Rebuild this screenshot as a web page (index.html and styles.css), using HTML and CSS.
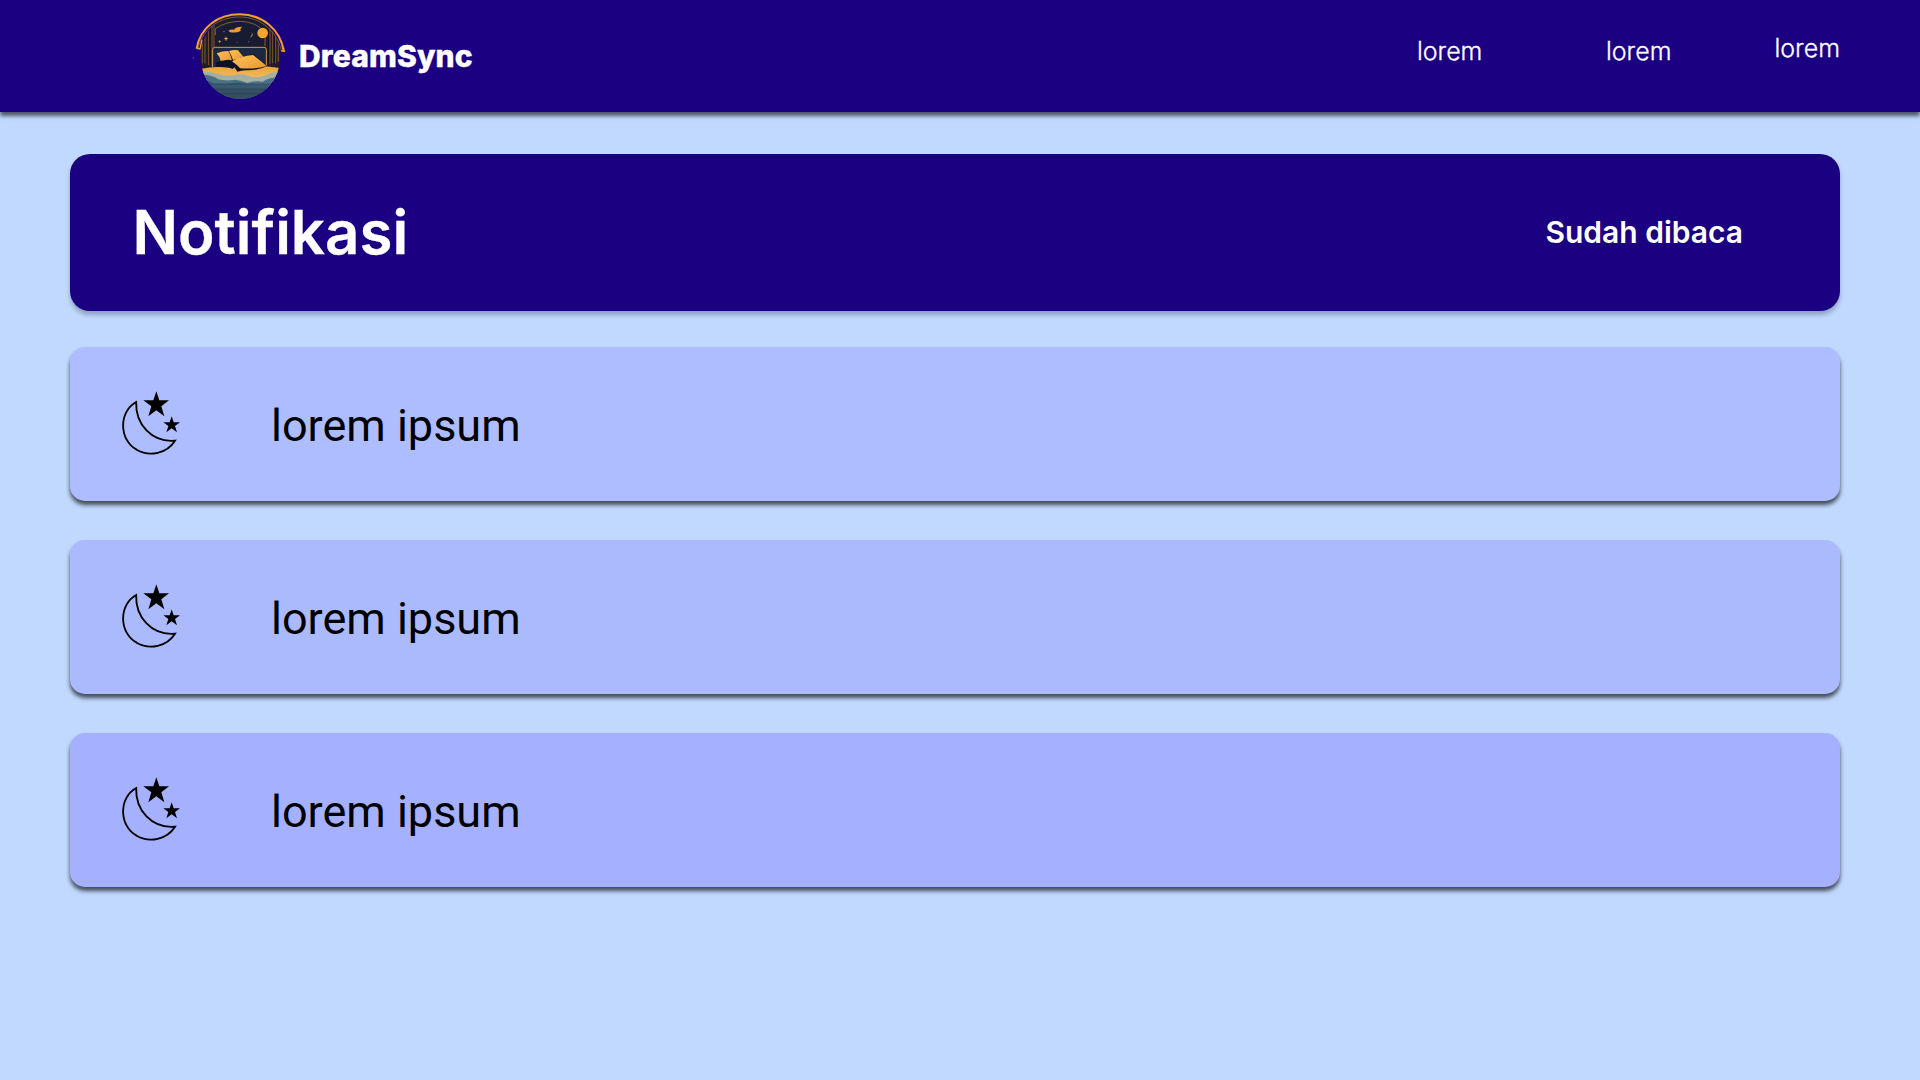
FILE: index.html
```html
<!DOCTYPE html>
<html lang="id">
<head>
<meta charset="utf-8">
<title>DreamSync</title>
<link rel="stylesheet" href="styles.css">
</head>
<body>
<svg class="defs" width="0" height="0" aria-hidden="true">
  <symbol id="night" viewBox="0 0 240 240">
    <path d="M78.500 66C26 95 26 179 80 209C119 232 171 220 195 182C125 188 76 133 78.500 66Z" fill="none" stroke="#000" stroke-width="5.500"/>
    <path d="M139 34L148 61L177 61L154 79L163 109L139 91L115 109L124 79L100 61L130 61Z"/>
    <path d="M185 109L191 127L210 127L195 138L201 157L185 145L169 157L175 138L160 127L179 127Z"/>
  </symbol>
</svg>
<header class="topbar">
  <div class="brand">
    <svg class="logo" viewBox="36 30 288 276">
      <defs>
        <clipPath id="disc"><ellipse cx="181" cy="169" rx="120" ry="128"/></clipPath>
        <linearGradient id="gold" x1="0" y1="0" x2="1" y2="1"><stop offset="0" stop-color="#ffc35a"/><stop offset="1" stop-color="#e8962f"/></linearGradient>
        <linearGradient id="quilt" x1="0" y1="0" x2="0" y2="1"><stop offset="0" stop-color="#eaa43c"/><stop offset="1" stop-color="#f5bd62"/></linearGradient>
      </defs>
      <g clip-path="url(#disc)">
        <rect x="50" y="30" width="260" height="275" fill="#171c32"/>
        <path d="M60 95H104V200H60ZM256 95H310V200H256Z" fill="#241d27"/>
        <path d="M67 100V190M75 90V190M86 80V195M96 74V198M102 76V200M270 82V192M278 88V190M287 98V190M295 108V185" stroke="#8a6332" stroke-width="2.5" fill="none"/>
        <path d="M90 76V190M265 78V190M283 92V190" stroke="#0d1226" stroke-width="3"/>
        <path d="M106 105V86Q138 64 181 64Q228 65 255 97V138" fill="none" stroke="#9b6b35" stroke-width="2.5"/>
        <path d="M98 202V148Q98 142 104 142H252Q259 142 259 148V205" fill="#1b2840" stroke="#d39c50" stroke-width="3"/>
        <path d="M65 206Q98 198 151 203L250 198L300 204V242H62Z" fill="url(#quilt)"/>
        <path d="M60 215Q85 212 106 220Q137 231 166 225Q187 220 202 227Q232 238 261 224Q286 212 305 217V270H60Z" fill="#a1afa5"/>
        <path d="M60 225Q90 221 115 238Q137 244 166 239Q182 240 202 249Q226 241 248 245Q274 229 305 234V310H60Z" fill="#4b7184"/>
        <path d="M60 238Q83 239 102 251H141L174 247L202 253H305V310H60Z" fill="#385a70"/>
        <path d="M60 267H305V310H60Z" fill="#344f61"/>
        <path d="M74 252H290M77 267H287M103 281H264" stroke="#20394e" stroke-width="1.5"/>
      </g>
      <path d="M54 147C66 91 112 51 180 51C243 51 292 96 304 152L315 155L310 137" fill="none" stroke="#8e5727" stroke-width="3"/>
      <path d="M50 145C61 85 110 43 180 43C246 43 301 88 311 153" fill="none" stroke="#f2a030" stroke-width="6"/>
      <path d="M49 145L60 147L66 119M303 152L315 155" stroke="#f2a030" stroke-width="4" fill="none"/>
      <path d="M107 188L126 180L162 176L188 170L158 207L145 202L109 200Z" fill="#0b1126"/>
      <path d="M110 160Q127 153 145 153L150 163L156 181L143 179L122 183Q120 170 110 160Z" fill="url(#gold)"/>
      <path d="M147 153Q162 149 174 151L190 170Q178 177 159 180Q154 164 147 153Z" fill="url(#gold)"/>
      <path d="M154 186L184 172L221 162L262 198Q238 210 206 211Q188 209 172 215Z" fill="#101328"/>
      <path d="M156 184Q184 167 219 165Q238 179 260 198Q229 208 180 205Q173 196 156 184Z" fill="url(#gold)"/>
      <path d="M145 92Q153 87 162 89Q166 80 187 80Q179 85 182 93Q170 99 151 97Z" fill="#f09a32"/>
      <circle cx="248" cy="99" r="16" fill="#f7a52d"/>
      <path d="M214 95Q224 108 209 113Q219 104 214 95Z" fill="#c69255"/>
      <path d="M138 109L140 114L145 116L140 118L138 124L136 118L131 116L136 114Z" fill="#f6ad42"/>
      <path d="M119 120L121 123L124 124L121 126L119 129L117 126L114 124L117 123Z" fill="#d18b3b"/>
      <circle cx="132" cy="95" r="2" fill="#c1803a"/><circle cx="171" cy="126" r="1.5" fill="#66718a"/><circle cx="206" cy="125" r="1.5" fill="#9a754b"/>
      <circle cx="40" cy="174" r="2" fill="#66509b"/>
    </svg>
    <span class="brand-name">DreamSync</span>
  </div>
  <nav class="nav">
    <a class="nav-link">lorem</a>
    <a class="nav-link">lorem</a>
    <a class="nav-link nav-link-last">lorem</a>
  </nav>
</header>
<main class="page">
  <section class="heading">
    <h1 class="title">Notifikasi</h1>
    <span class="read">Sudah dibaca</span>
  </section>
  <section class="list">
    <article class="item"><svg class="icon"><use href="#night"/></svg><p class="text">lorem ipsum</p></article>
    <article class="item item-second"><svg class="icon"><use href="#night"/></svg><p class="text">lorem ipsum</p></article>
    <article class="item item-third"><svg class="icon"><use href="#night"/></svg><p class="text">lorem ipsum</p></article>
  </section>
</main>
</body>
</html>
```
FILE: styles.css
```css
* { box-sizing: border-box; }
body {
  margin: 0;
  height: 1080px;
  overflow: hidden;
  background: #c1d9ff;
  font-family: Inter, sans-serif;
}
.defs { display: block; }
.topbar {
  display: flex;
  justify-content: space-between;
  height: 111.5px;
  padding: 10px 80px 0 192px;
  background: #1b0082;
  color: #fff;
  box-shadow: 0 4px 4px rgba(0, 0, 0, .6);
}
.brand { display: flex; align-items: flex-start; gap: 11px; }
.logo { width: 96px; height: 92px; }
.brand-name {
  margin-top: 28px;
  font-size: 30px;
  line-height: 36px;
  font-weight: 800;
  letter-spacing: .15px;
  -webkit-text-stroke: .4px #fff;
}
.nav { display: flex; align-items: flex-start; padding-top: 26px; }
.nav-link {
  margin-right: 123.5px;
  font-size: 25px;
  line-height: 30px;
  font-weight: 300;
  -webkit-text-stroke: .3px #fff;
}
.nav-link:nth-child(2) { margin-right: 103px; }
.nav-link-last { margin: -3px 0 0; }
.page { padding: 42px 80px 0 70px; }
.heading {
  display: flex;
  align-items: center;
  justify-content: space-between;
  height: 157.5px;
  padding: 0 97px 0 62.5px;
  border-radius: 20px;
  background: #1b0082;
  color: #fff;
  box-shadow: 0 4px 4px rgba(0, 0, 0, .25);
}
.title {
  margin: 0;
  font-size: 60px;
  line-height: 72px;
  font-weight: 600;
  -webkit-text-stroke: .3px #fff;
}
.read { font-size: 30px; line-height: 36px; font-weight: 600; }
.list { display: flex; flex-direction: column; gap: 39px; margin-top: 36px; }
.item {
  display: flex;
  align-items: center;
  height: 154px;
  padding-left: 40px;
  border-radius: 15px;
  background: #aebdff;
  box-shadow: 0 4px 4px rgba(0, 0, 0, .65);
}
.item-second { background: #abbafd; }
.item-third { background: #a5b0ff; }
.icon { width: 80px; height: 80px; margin-top: -8px; }
.text {
  margin: 2px 0 0 81px;
  color: #000;
  font-family: Roboto, sans-serif;
  font-size: 45px;
  line-height: 53px;
}
```
